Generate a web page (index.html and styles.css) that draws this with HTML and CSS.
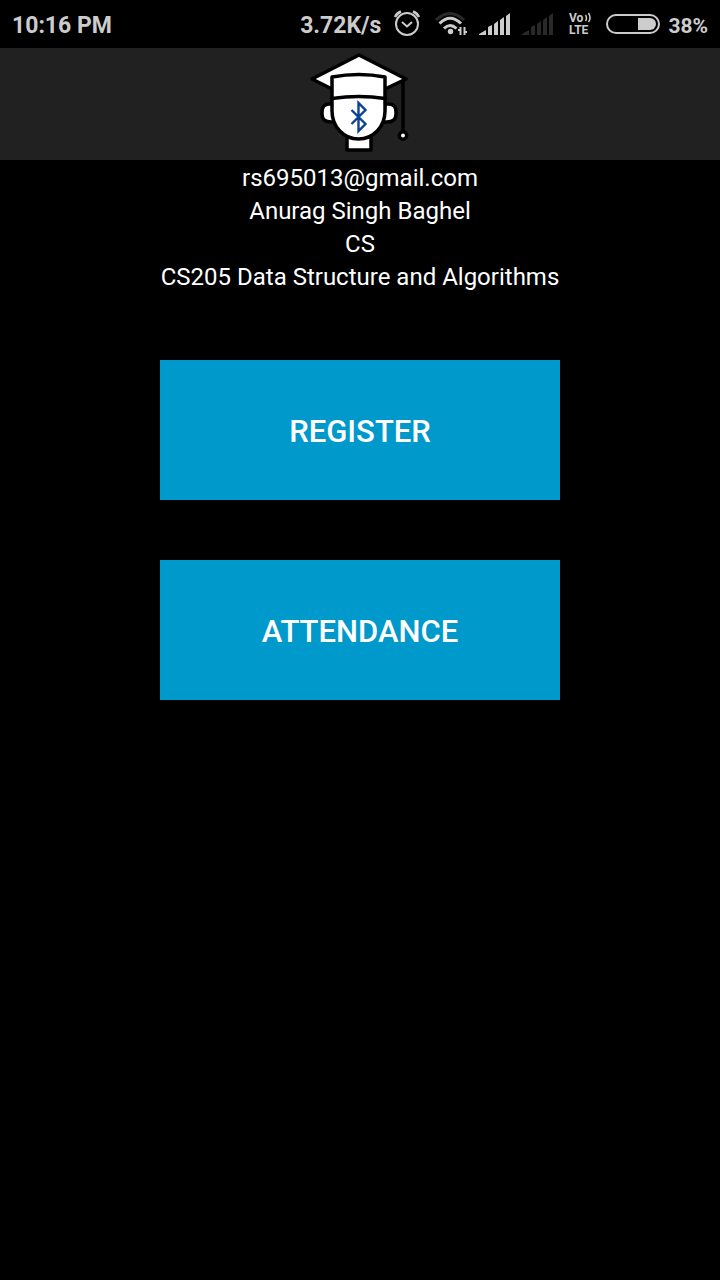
FILE: index.html
```html
<!DOCTYPE html>
<html lang="en">
<head>
<meta charset="utf-8">
<meta name="viewport" content="width=device-width, initial-scale=1">
<title>Attendance</title>
<link rel="stylesheet" href="styles.css">
</head>
<body>
<div class="status-bar">
  <span class="clock">10:16 PM</span>
  <div class="status-icons">
    <span class="speed">3.72K/s</span>
    <svg class="alarm" width="28" height="28" viewBox="0 0 28 28" fill="none" stroke="#ccc" stroke-width="2">
      <circle cx="14" cy="14" r="11"/>
      <path d="M9 12l5 4.500 5-4.500"/>
      <path d="M2 7q2-4 6-5.500M26 7q-2-4-6-5.500" stroke-width="2.500"/>
    </svg>
    <svg class="wifi" width="32" height="26" viewBox="0 0 32 26" fill="none" stroke-width="3">
      <path d="M1 9Q15-4 29 9" stroke="#292929"/>
      <path d="M4.500 12.500Q15 2 26 12.500M9 17.500Q15 11.500 21.500 17.500" stroke="#ccc" stroke-width="3"/>
      <circle cx="15.500" cy="20.500" r="2.700" fill="#ccc"/>
      <path d="M25.500 16v8M29.500 16v8" stroke="#ccc" stroke-width="2"/>
      <path d="M23 19h2M30 21h2" stroke="#ccc" stroke-width="2"/>
    </svg>
    <svg class="signal" width="31" height="22" viewBox="0 0 31 22" fill="#ccc">
      <path d="M0 22v-1l7-4v5zM9 22v-8l4-2v10zM15 22v-11l4-3v14zM21 22V7l4-3v18zM27 22V3l4-3v22z"/>
    </svg>
    <svg class="signal" width="31" height="22" viewBox="0 0 31 22" fill="#292929">
      <path d="M0 22v-1l7-4v5zM9 22v-8l4-2v10zM15 22v-11l4-3v14zM21 22V7l4-3v18zM27 22V3l4-3v22z"/>
    </svg>
    <svg class="volte" width="24" height="30" viewBox="0 0 24 30">
      <text x="1" y="13">Vo</text>
      <text x="1" y="25">LTE</text>
      <path d="M17.500 6q2 3 0 6M20.500 4q3 5 0 9" fill="none" stroke="#ccc" stroke-width="1.500"/>
    </svg>
    <svg class="battery" width="54" height="20" viewBox="0 0 54 20">
      <rect x="1" y="1" width="52" height="18" rx="9" fill="none" stroke="#ccc" stroke-width="2"/>
      <path d="M32 4h12a6 6 0 0 1 0 12H32z" fill="#ccc"/>
    </svg>
    <span class="percent">38%</span>
  </div>
</div>
<header class="app-bar">
  <svg width="120" height="112" viewBox="0 0 120 112" fill="#fff" stroke="#000" stroke-width="3.500" stroke-linejoin="round" stroke-linecap="round" role="img" aria-label="Student logo">
    <path d="M47 88h24v14H47z"/>
    <path d="M33 56h-4q-7 0-7 8v2q0 8 9 8h4zM85 56h4q7 0 7 8v2q0 8-9 8h-4z"/>
    <path d="M12 31L59 7l47 24-21 10H32z"/>
    <path d="M32 29q27-5 53 0v34c0 16-12 28-26.500 28S32 79 32 63z"/>
    <path d="M32 50.500q27-4 53 0" fill="none"/>
    <path d="M103 33v50" fill="none"/>
    <circle cx="103" cy="87.500" r="3.700"/>
    <path d="M51.500 62l14 14-7 7V55l7 7-14 14" fill="none" stroke="#0b4295" stroke-width="2.400" stroke-linejoin="miter" stroke-linecap="butt"/>
  </svg>
</header>
<main>
  <section class="details">
    <p>rs695013@gmail.com</p>
    <p>Anurag Singh Baghel</p>
    <p>CS</p>
    <p>CS205 Data Structure and Algorithms</p>
  </section>
  <div class="actions">
    <button type="button">REGISTER</button>
    <button type="button">ATTENDANCE</button>
  </div>
</main>
</body>
</html>
```
FILE: styles.css
```css
* { box-sizing: border-box; }
body {
  margin: 0;
  min-height: 100vh;
  background: #000;
  color: #fff;
  font-family: Roboto, "Liberation Sans", sans-serif;
}
.status-bar {
  display: flex;
  align-items: center;
  justify-content: space-between;
  height: 48px;
  padding: 0 12px;
  color: #ccc;
  font-size: 23px;
  line-height: 28px;
  font-weight: 700;
}
.clock, .speed, .percent { padding-top: 3px; }
.status-icons { display: flex; align-items: center; }
.status-icons svg { flex: none; }
.alarm { margin: 0 14px 0 12px; }
.wifi { margin-right: 12px; }
.signal { margin-right: 12px; }
.volte { margin: 0 14px 0 3px; fill: #ccc; font-size: 12px; }
.battery { margin-right: 8px; }
.percent { font-size: 21px; }
.app-bar {
  display: flex;
  justify-content: center;
  background: #212121;
}
.app-bar svg { display: block; }
.details {
  padding-top: 2px;
  font-size: 24px;
  line-height: 33px;
  text-align: center;
}
.details p { margin: 0; }
.actions {
  display: grid;
  justify-content: center;
  grid-template-columns: minmax(0, 400px);
  gap: 60px;
  padding-top: 66px;
}
.actions button {
  min-height: 140px;
  padding: 2px 16px 0;
  border: 0;
  background: #0099cc;
  color: #fff;
  font-family: inherit;
  font-size: 31px;
  font-weight: 500;
}
```
